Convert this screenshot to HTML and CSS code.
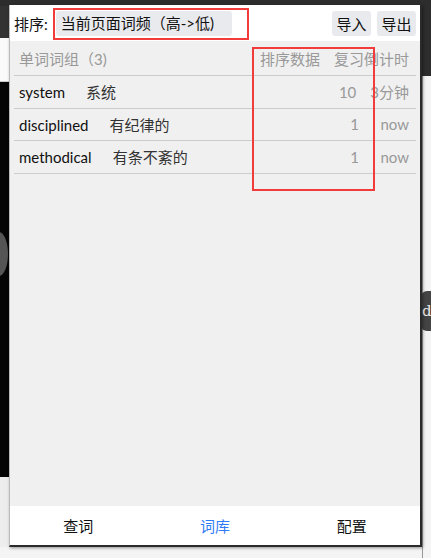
FILE: index.html
```html
<!DOCTYPE html>
<html lang="zh">
<head>
<meta charset="utf-8">
<link rel="stylesheet" href="styles.css">
</head>
<body>
<div class="backdrop">
  <div class="bg-top"></div>
  <div class="bg-left-dark"></div>
  <div class="bg-left-light"></div>
  <div class="bg-left-black"><div class="moon"></div></div>
  <div class="bg-left-page"></div>
  <div class="bg-right-dark"></div>
  <div class="bg-right-line"></div>
  <div class="bg-badge">d</div>
</div>

<div class="popup">
  <div class="toolbar">
    <span class="label">排序:</span>
    <div class="select">当前页面词频（高-&gt;低)</div>
    <div class="spacer"></div>
    <button class="btn">导入</button>
    <button class="btn">导出</button>
  </div>

  <div class="content">
    <div class="row head">
      <div class="word">单词词组（3)</div>
      <div class="num">排序数据</div>
      <div class="time">复习倒计时</div>
    </div>
    <div class="row">
      <div class="word"><span class="en">system</span><span class="zh">系统</span></div>
      <div class="num">10</div>
      <div class="time">3分钟</div>
    </div>
    <div class="row">
      <div class="word"><span class="en">disciplined</span><span class="zh">有纪律的</span></div>
      <div class="num">1</div>
      <div class="time">now</div>
    </div>
    <div class="row">
      <div class="word"><span class="en">methodical</span><span class="zh">有条不紊的</span></div>
      <div class="num">1</div>
      <div class="time">now</div>
    </div>
  </div>

  <nav class="tabs">
    <div class="tab">查词</div>
    <div class="tab active">词库</div>
    <div class="tab">配置</div>
  </nav>

  <div class="mark mark-select"></div>
  <div class="mark mark-col"></div>
</div>
</body>
</html>
```

FILE: styles.css
```css
* { box-sizing: border-box; }
html, body { margin: 0; padding: 0; }
body {
  width: 431px;
  height: 558px;
  overflow: hidden;
  position: relative;
  background: #f4f4f4;
  font-family: "Lato", "Noto Sans CJK SC", sans-serif;
  font-size: 15px;
  color: #222;
}

/* background page pieces */
.backdrop { position: absolute; inset: 0; }
.bg-top { position: absolute; left: 0; top: 0; width: 431px; height: 6px; background: #2d2d2d; }
.bg-left-dark { position: absolute; left: 0; top: 6px; width: 10px; height: 32px; background: #333; }
.bg-left-light { position: absolute; left: 0; top: 38px; width: 10px; height: 44px; background: #fafafa; border-bottom: 1px solid #ccc; }
.bg-left-black { position: absolute; left: 0; top: 82px; width: 10px; height: 395px; background: #050505; overflow: hidden; }
.moon { position: absolute; left: -10px; top: 150px; width: 18px; height: 44px; border-radius: 50%; background: #555; }
.bg-left-page { position: absolute; left: 0; top: 477px; width: 10px; height: 70px; background: #ededed; }
.bg-right-dark { position: absolute; left: 421px; top: 6px; width: 10px; height: 70px; background: #2d2d2d; }
.bg-right-line { position: absolute; left: 422px; top: 76px; width: 1px; height: 482px; background: #999; }
.bg-badge {
  position: absolute; left: 421px; top: 291px; width: 14px; height: 40px;
  background: #444; color: #eee; border-radius: 6px 0 0 6px;
  font-family: "DejaVu Serif", serif; font-size: 15px; line-height: 40px; padding-left: 1px;
}

/* popup window */
.popup {
  position: absolute;
  left: 9px;
  top: 5px;
  width: 413px;
  height: 542px;
  background: #f0f0f0;
  display: flex;
  flex-direction: column;
  border-right: 2px solid #2a2a2a;
  border-bottom: 2px solid #2a2a2a;
  border-left: 1px solid #bbb;
  box-shadow: 1px 1px 3px rgba(0,0,0,0.4);
}

.toolbar {
  height: 36px;
  background: #fff;
  display: flex;
  align-items: center;
  padding: 0 4px 0 4px;
  flex: none;
}
.label { color: #111; }
.select {
  margin-left: 8px;
  width: 176px;
  height: 25px;
  line-height: 25px;
  background: #e9eaee;
  border-radius: 3px;
  padding-left: 5px;
  color: #111;
  white-space: nowrap;
}
.spacer { flex: 1; }
.btn {
  font: inherit;
  color: #111;
  border: none;
  background: #e9eaee;
  border-radius: 3px;
  height: 25px;
  width: 39px;
  padding: 0;
  margin-left: 6px;
}

.content {
  flex: 1;
  padding: 0 4px 0 4px;
  background: #f0f0f0;
}
.row {
  display: flex;
  align-items: center;
  gap: 14px;
  height: 32.5px;
  padding: 0 7px 0 5px;
  border-bottom: 1px solid #ccc;
}
.row.head { height: 35px; color: #999; }
.word { flex: 1; white-space: nowrap; }
.en { color: #111; }
.zh { color: #333; margin-left: 21px; }
.num { color: #999; text-align: right; white-space: nowrap; }
.time { color: #999; min-width: 36px; text-align: right; white-space: nowrap; }
.row.head .word, .row.head .num, .row.head .time { color: #999; }

.tabs {
  height: 39px;
  flex: none;
  background: #fff;
  display: grid;
  grid-template-columns: 1fr 1fr 1fr;
  align-items: center;
  text-align: center;
  font-size: 15px;
  color: #111;
}
.tab.active { color: #2f7cf6; }

/* red annotation boxes */
.mark { position: absolute; border: 2px solid #f23c3c; pointer-events: none; }
.mark-select { left: 43px; top: 3px; width: 196px; height: 32px; }
.mark-col { left: 242px; top: 42px; width: 123px; height: 144px; }
```
